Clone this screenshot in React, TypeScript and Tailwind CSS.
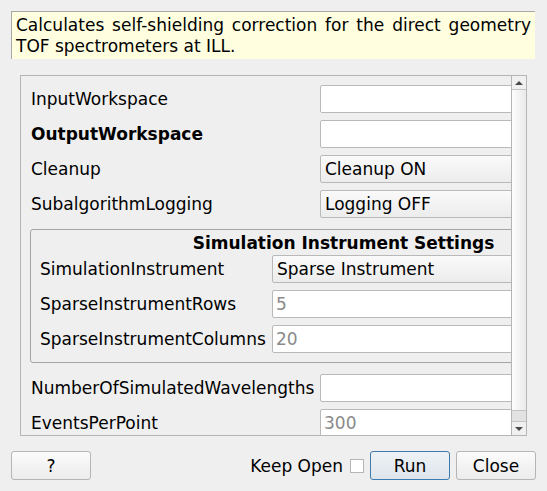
import React from 'react';

const inputBox =
  'h-[28px] rounded-[2px] border border-[#b9b9b9] bg-white px-[3px] flex items-center';
const comboBox =
  'h-[28px] rounded-[2px] border border-[#b9b9b9] bg-gradient-to-b from-[#fafafa] to-[#ececec] px-[4px] flex items-center';

function Field({ kind, value }: { kind: 'input' | 'combo'; value?: string }) {
  if (kind === 'combo') {
    return <div className={comboBox}>{value}</div>;
  }
  return <div className={`${inputBox} text-[#8a8a8a]`}>{value}</div>;
}

interface RowProps {
  label: string;
  bold?: boolean;
  kind: 'input' | 'combo';
  value?: string;
  labelWidth: number;
}

function Row({ label, bold, kind, value, labelWidth }: RowProps) {
  return (
    <div className="flex items-center">
      <div
        className={`shrink-0 whitespace-nowrap ${bold ? 'font-bold' : ''}`}
        style={{ width: labelWidth }}
      >
        {label}
      </div>
      <div className="flex-1">
        <Field kind={kind} value={value} />
      </div>
    </div>
  );
}

function Scrollbar() {
  return (
    <div className="flex w-[15px] shrink-0 flex-col border-l border-[#b5b5b5]">
      <div className="flex h-[14px] items-center justify-center border-b border-[#c4c4c4] bg-[#f0f0f0]">
        <div className="h-0 w-0 border-x-[4px] border-b-[4px] border-x-transparent border-b-[#4a4a4a]" />
      </div>
      <div className="flex-1 bg-gradient-to-r from-[#fdfdfd] to-[#eaeaea]" />
      <div className="h-[11px] border-t border-[#c4c4c4] bg-[#e2e2e2]" />
      <div className="flex h-[14px] items-center justify-center border-t border-[#c4c4c4] bg-[#f0f0f0]">
        <div className="h-0 w-0 border-x-[4px] border-t-[4px] border-x-transparent border-t-[#4a4a4a]" />
      </div>
    </div>
  );
}

export default function App() {
  return (
    <div className="relative h-[491px] w-[547px] overflow-hidden bg-[#efefef] font-['DejaVu_Sans',sans-serif] text-[17px] leading-[20px] text-black">
      <div className="ml-[11px] mt-[11px] h-[48px] w-[524px] border-l border-t border-[#a8a8a8] bg-[#ffffe0] px-[4px] pt-[3px] text-justify leading-[21px] [text-align-last:left]">
        Calculates self-shielding correction for the direct geometry TOF spectrometers at ILL.
      </div>

      <div className="ml-[20px] mt-[16px] flex h-[361px] w-[507px] border border-[#b5b5b5]">
        <div className="flex-1 overflow-hidden">
          <div className="flex w-[646px] flex-col gap-[7px] pl-[10px] pr-[10px] pt-[9px]">
            <Row label="InputWorkspace" kind="input" labelWidth={289} />
            <Row label="OutputWorkspace" bold kind="input" labelWidth={289} />
            <Row label="Cleanup" kind="combo" value="Cleanup ON" labelWidth={289} />
            <Row label="SubalgorithmLogging" kind="combo" value="Logging OFF" labelWidth={289} />

            <div className="-ml-[1px] mt-[4px] rounded-[3px] border border-[#a4a4a4] px-[9px] pb-[9px] pt-[3px]">
              <div className="text-center font-bold leading-[20px]">Simulation Instrument Settings</div>
              <div className="mt-[2px] flex flex-col gap-[7px]">
                <Row label="SimulationInstrument" kind="combo" value="Sparse Instrument" labelWidth={232} />
                <Row label="SparseInstrumentRows" kind="input" value="5" labelWidth={232} />
                <Row label="SparseInstrumentColumns" kind="input" value="20" labelWidth={232} />
              </div>
            </div>

            <div className="mt-[4px]">
              <Row label="NumberOfSimulatedWavelengths" kind="input" labelWidth={289} />
            </div>
            <Row label="EventsPerPoint" kind="input" value="300" labelWidth={289} />
          </div>
        </div>
        <Scrollbar />
      </div>

      <div className="mt-[15px] flex items-center px-[11px]">
        <button className="h-[29px] w-[80px] rounded-[3px] border border-[#b5b5b5] bg-gradient-to-b from-[#fbfbfb] to-[#ececec]">
          ?
        </button>
        <div className="flex-1" />
        <span className="mr-[7px]">Keep Open</span>
        <span className="mr-[6px] h-[14px] w-[14px] border border-[#b5b5b5] bg-white" />
        <button className="h-[29px] w-[80px] rounded-[3px] border border-[#3d7ab0] bg-gradient-to-b from-[#eef2f5] to-[#dde5ec]">
          Run
        </button>
        <button className="ml-[6px] h-[29px] w-[80px] rounded-[3px] border border-[#b5b5b5] bg-gradient-to-b from-[#fbfbfb] to-[#ececec]">
          Close
        </button>
      </div>
    </div>
  );
}
